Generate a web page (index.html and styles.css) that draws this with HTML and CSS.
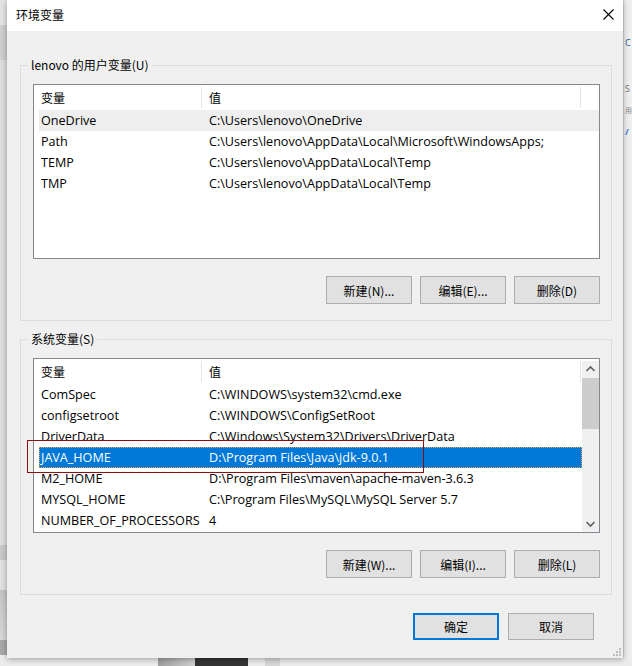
FILE: index.html
```html
<!DOCTYPE html>
<html lang="zh-CN">
<head>
<meta charset="utf-8">
<title>环境变量</title>
<link rel="stylesheet" href="styles.css">
</head>
<body>
<div class="desktop">
  <div class="bg-left"></div>
  <div class="bg-right">
    <span class="frag f1">C</span>
    <span class="frag f2">S</span>
    <span class="frag f3">用</span>
    <span class="frag f4">/</span>
  </div>
  <div class="bg-bottom">
    <div class="bb b1"></div>
    <div class="bb b2"></div>
    <div class="bb b3"></div>
  </div>
  <div class="bg-top">
    <div class="bt t1"></div>
    <div class="bt t2"></div>
    <div class="bt t3"></div>
  </div>

  <div class="dialog">
    <div class="titlebar">
      <span class="title">环境变量</span>
      <svg class="close" width="11" height="11" viewBox="0 0 11 11"><path d="M0.5 0.5 L10.5 10.5 M10.5 0.5 L0.5 10.5" stroke="#000" stroke-width="1.1" fill="none"/></svg>
    </div>
    <div class="content">
      <fieldset class="group group-user">
        <legend>lenovo 的用户变量(U)</legend>
        <div class="list">
          <div class="header">
            <div class="hcell c1">变量</div>
            <div class="hcell c2">值</div>
          </div>
          <div class="row hover"><div class="cell c1">OneDrive</div><div class="cell c2">C:\Users\lenovo\OneDrive</div></div>
          <div class="row"><div class="cell c1">Path</div><div class="cell c2">C:\Users\lenovo\AppData\Local\Microsoft\WindowsApps;</div></div>
          <div class="row"><div class="cell c1">TEMP</div><div class="cell c2">C:\Users\lenovo\AppData\Local\Temp</div></div>
          <div class="row"><div class="cell c1">TMP</div><div class="cell c2">C:\Users\lenovo\AppData\Local\Temp</div></div>
        </div>
        <div class="buttons">
          <button class="btn">新建(N)...</button>
          <button class="btn">编辑(E)...</button>
          <button class="btn">删除(D)</button>
        </div>
      </fieldset>

      <fieldset class="group group-sys">
        <legend>系统变量(S)</legend>
        <div class="list list-scroll">
          <div class="list-main">
            <div class="header">
              <div class="hcell c1">变量</div>
              <div class="hcell c2">值</div>
            </div>
            <div class="row"><div class="cell c1">ComSpec</div><div class="cell c2">C:\WINDOWS\system32\cmd.exe</div></div>
            <div class="row"><div class="cell c1">configsetroot</div><div class="cell c2">C:\WINDOWS\ConfigSetRoot</div></div>
            <div class="row"><div class="cell c1">DriverData</div><div class="cell c2">C:\Windows\System32\Drivers\DriverData</div></div>
            <div class="row selected"><div class="cell c1">JAVA_HOME</div><div class="cell c2">D:\Program Files\Java\jdk-9.0.1</div></div>
            <div class="row"><div class="cell c1">M2_HOME</div><div class="cell c2">D:\Program Files\maven\apache-maven-3.6.3</div></div>
            <div class="row"><div class="cell c1">MYSQL_HOME</div><div class="cell c2">C:\Program Files\MySQL\MySQL Server 5.7</div></div>
            <div class="row"><div class="cell c1">NUMBER_OF_PROCESSORS</div><div class="cell c2">4</div></div>
          </div>
          <div class="scrollbar">
            <svg class="arrow" width="17" height="17" viewBox="0 0 17 17"><polyline points="4.5,10 8.5,6 12.5,10" stroke="#606060" stroke-width="1.6" fill="none"/></svg>
            <div class="track"><div class="thumb"></div></div>
            <svg class="arrow" width="17" height="17" viewBox="0 0 17 17"><polyline points="4.5,7 8.5,11 12.5,7" stroke="#606060" stroke-width="1.6" fill="none"/></svg>
          </div>
        </div>
        <div class="buttons">
          <button class="btn">新建(W)...</button>
          <button class="btn">编辑(I)...</button>
          <button class="btn">删除(L)</button>
        </div>
      </fieldset>

      <div class="footer">
        <button class="btn btn-default">确定</button>
        <button class="btn">取消</button>
      </div>
      <svg class="grip" width="8" height="8" viewBox="0 0 8 8">
        <rect x="6" y="0" width="2" height="2" fill="#bcbcbc"/>
        <rect x="3" y="3" width="2" height="2" fill="#bcbcbc"/>
        <rect x="6" y="3" width="2" height="2" fill="#bcbcbc"/>
        <rect x="0" y="6" width="2" height="2" fill="#bcbcbc"/>
        <rect x="3" y="6" width="2" height="2" fill="#bcbcbc"/>
        <rect x="6" y="6" width="2" height="2" fill="#bcbcbc"/>
      </svg>
    </div>
    <div class="annotation"></div>
  </div>
</div>
</body>
</html>
```

FILE: styles.css
```css
html, body {
  margin: 0;
  padding: 0;
}
body {
  width: 632px;
  height: 666px;
  overflow: hidden;
  font-family: "Open Sans", "Noto Sans CJK SC", sans-serif;
  font-size: 12px;
  color: #000;
}
.desktop {
  position: relative;
  width: 632px;
  height: 666px;
  background: #ececec;
  overflow: hidden;
}

/* background windows */
.bg-left {
  position: absolute;
  left: 0; top: 0;
  width: 8px; height: 666px;
  background: linear-gradient(#e4e4e4 0, #e4e4e4 25px, #cfcfcf 25px, #cfcfcf 60px, #dedede 60px, #dedede 545px, #c9c9c9 545px, #c9c9c9 560px, #e2e2e2 560px, #e2e2e2 590px, #c4c4c4 590px, #d8d8d8 640px, #a9a9a9 640px, #a9a9a9 655px, #ececec 655px);
}
.bg-right {
  position: absolute;
  left: 623px; top: 0;
  width: 9px; height: 666px;
  background: #efefef;
  border-left: 1px solid #d6d6d6;
  box-sizing: border-box;
}
.frag {
  position: absolute;
  left: 1px;
  font-size: 9px;
  line-height: 10px;
  color: #555;
}
.f1 { top: 38px; color: #2a5a9a; }
.f2 { top: 84px; color: #777; }
.f3 { top: 106px; font-size: 7px; color: #888; }
.f4 { top: 127px; color: #3a7bd5; font-weight: bold; }
.bg-bottom {
  position: absolute;
  left: 0; top: 658px;
  width: 632px; height: 8px;
  background: #ececec;
}
.bb { position: absolute; top: 0; height: 8px; }
.b1 { left: 158px; width: 37px; background: linear-gradient(90deg, #9e9e9e, #cfcfcf); }
.b2 { left: 195px; width: 53px; background: #343434; }
.b3 { left: 265px; width: 15px; background: #d7d7d7; }
.bg-top {
  position: absolute;
  left: 0; top: 0;
  width: 632px; height: 3px;
}
.bt { position: absolute; top: 0; height: 2px; }
.t1 { left: 262px; width: 6px; background: #e3a23a; }
.t2 { left: 330px; width: 8px; background: #e05a20; }
.t3 { left: 420px; width: 40px; background: #9a9a9a; }

/* dialog */
.dialog {
  position: absolute;
  left: 7px; top: 0;
  width: 616px;
  height: 658px;
  background: #f0f0f0;
  box-shadow: 0 1px 6px rgba(0, 0, 0, 0.35);
  display: flex;
  flex-direction: column;
}
.titlebar {
  height: 31px;
  background: #fff;
  display: flex;
  align-items: center;
  justify-content: space-between;
  padding: 0 9px 0 9px;
  flex: none;
}
.title {
  font-family: "Noto Sans CJK SC", sans-serif;
  font-size: 12px;
  line-height: 16px;
  margin-top: -1px;
}
.close {
  display: block;
  margin-top: -2px;
}
.content {
  position: relative;
  flex: 1;
  padding-top: 26px;
}

.group {
  margin: 0 11px 0 13px;
  border: 1px solid #dcdcdc;
  padding: 0 11px 16px 12px;
  min-width: 0;
}
.group legend {
  margin-left: -5px;
  padding: 0 3px;
  font-family: "Noto Sans CJK SC", "Open Sans", sans-serif;
  font-size: 12px;
  line-height: 16px;
  height: 16px;
}
.group-user .list { margin-top: 11px; }
.group-sys { margin-top: 10px; }
.group-sys .list { margin-top: 11px; }

.list {
  height: 175px;
  box-sizing: border-box;
  border: 1px solid #828790;
  background: #fff;
  overflow: hidden;
}
.list-scroll {
  display: flex;
}
.list-main {
  flex: 1;
  min-width: 0;
}
.header {
  display: grid;
  grid-template-columns: 168px 379px;
  height: 25px;
  align-items: center;
}
.hcell {
  height: 25px;
  line-height: 25px;
  font-family: "Noto Sans CJK SC", sans-serif;
  background: linear-gradient(#e5e5e5, #e5e5e5) right 2px / 1px 21px no-repeat;
}
.hcell.c1 { padding-left: 7px; }
.hcell.c2 { padding-left: 7px; }

.row {
  display: grid;
  grid-template-columns: 163px 379px;
  margin-left: 5px;
  height: 21px;
  box-sizing: border-box;
  align-items: center;
  white-space: nowrap;
}
.cell {
  line-height: 21px;
  font-size: 12.6px;
  overflow: hidden;
}
.cell.c1 { padding-left: 2px; }
.cell.c2 { padding-left: 7px; }
.row.hover { background: #eeeeee; }
.row.selected {
  background: #0078d7;
  color: #fff;
  outline: 1px dotted #f3a341;
  outline-offset: -1px;
}

.scrollbar {
  width: 17px;
  flex: none;
  background: #f0f0f0;
  display: flex;
  flex-direction: column;
  margin-top: 2px;
}
.arrow { display: block; flex: none; }
.track { flex: 1; }
.thumb {
  height: 51px;
  background: #cdcdcd;
}

.buttons {
  display: flex;
  justify-content: flex-end;
  gap: 8px;
  margin-top: 17px;
}
.btn {
  width: 86px;
  height: 28px;
  box-sizing: border-box;
  border: 1px solid #adadad;
  background: #e1e1e1;
  font-family: "Noto Sans CJK SC", "Open Sans", sans-serif;
  font-size: 12px;
  color: #000;
  padding: 0;
  margin: 0;
}
.footer {
  display: flex;
  justify-content: flex-end;
  gap: 9px;
  padding-right: 29px;
  margin-top: 18px;
}
.footer .btn { height: 27px; }
.btn-default {
  border: 2px solid #0078d7;
}
.grip {
  position: absolute;
  right: 2px;
  bottom: 2px;
}
.annotation {
  position: absolute;
  left: 20px;
  top: 440px;
  width: 397px;
  height: 33px;
  box-sizing: border-box;
  border: 1px solid #8b0f0f;
  pointer-events: none;
}
```
